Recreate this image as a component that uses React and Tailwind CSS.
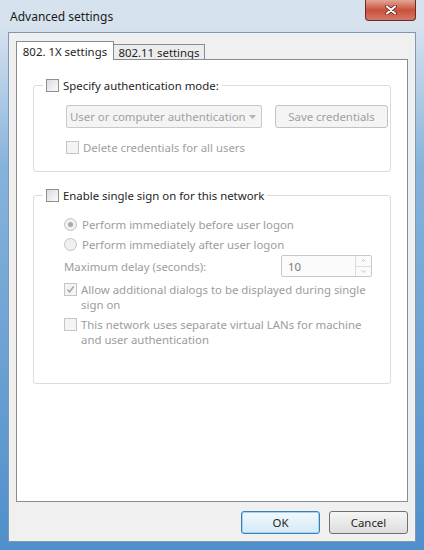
import { ChevronDown, ChevronUp } from 'lucide-react';

function Box({ checked = false, disabled = false }) {
  return (
    <span
      className={`flex h-[13px] w-[13px] shrink-0 items-center justify-center border ${
        disabled ? 'border-[#c5c5c5] bg-[#f4f4f4]' : 'border-[#8f8f8f] bg-gradient-to-br from-[#dcdcdc] to-[#fbfbfb]'
      }`}
    >
      {checked && (
        <svg width="9" height="9" viewBox="0 0 9 9">
          <path d="M1.5 4.5 L3.6 7 L7.6 1.5" fill="none" stroke="#a8a8a8" strokeWidth="1.6" />
        </svg>
      )}
    </span>
  );
}

function Radio({ checked = false }) {
  return (
    <span className="flex h-[13px] w-[13px] shrink-0 items-center justify-center rounded-full border border-[#c3c3c3] bg-[#f0f0f0]">
      {checked && <span className="h-[5px] w-[5px] rounded-full bg-[#a9a9a9]" />}
    </span>
  );
}

function Group({ label, className, children }) {
  return (
    <div className={`relative rounded-[3px] border border-[#dcdcdc] ${className}`}>
      <div className="absolute left-[9px] top-[-8px] flex items-center gap-[4px] bg-white px-[3px] text-[#1e1e1e]">
        <Box />
        <span>{label}</span>
      </div>
      {children}
    </div>
  );
}

export default function App() {
  return (
    <div
      className="flex h-[550px] w-[424px] flex-col bg-gradient-to-b from-[#d6e2ee] from-5% via-[#86b3dc] via-30% to-[#4f8fcb] text-[11.4px] leading-[15px]"
      style={{ fontFamily: '"Noto Sans", "Open Sans", sans-serif' }}
    >
      <div className="relative flex h-[32px] items-center pl-[10px] text-[12px] text-[#1b1b1b]">
        Advanced settings
        <div className="absolute right-[8px] top-0 flex h-[21px] w-[51px] items-center justify-center rounded-b-[4px] border border-t-0 border-[#6e2a22] bg-gradient-to-b from-[#e2a595] via-[#c9503a] to-[#d2786a]">
          <svg width="12" height="10" viewBox="0 0 12 10">
            <path d="M2 1.5 L10 8.5 M10 1.5 L2 8.5" stroke="#5a1a10" strokeWidth="3.6" strokeLinecap="round" />
            <path d="M2 1.5 L10 8.5 M10 1.5 L2 8.5" stroke="#ffffff" strokeWidth="2.2" strokeLinecap="round" />
          </svg>
        </div>
      </div>

      <div className="mx-[8px] mb-[8px] flex flex-1 flex-col border border-[#8498ad] bg-[#f0f0f0] px-[7px] pt-[8px]">
        <div className="flex items-end">
          <div className="z-10 -mb-px flex h-[19px] w-[98px] items-center justify-center border border-b-0 border-[#898c95] bg-white text-[#1e1e1e]">
            802. 1X settings
          </div>
          <div className="flex h-[15px] w-[91px] items-center justify-center whitespace-nowrap border border-b-0 border-l-0 border-[#898c95] bg-[#ececec] text-[#1e1e1e]">
            802.11 settings
          </div>
        </div>

        <div className="flex h-[443px] flex-col border border-[#898c95] bg-white px-[16px] pt-[25px]">
          <Group label="Specify authentication mode:" className="h-[87px]">
            <div className="flex items-center gap-[13px] pl-[32px] pt-[19px]">
              <div className="flex h-[23px] w-[196px] items-center justify-between whitespace-nowrap rounded-[2px] border border-[#c9c9c9] bg-[#f4f4f4] pl-[3px] pr-[5px] text-[#a0a0a0]">
                <span>User or computer authentication</span>
                <svg width="7" height="4" viewBox="0 0 7 4">
                  <path d="M0 0 L7 0 L3.5 4 Z" fill="#b3b3b3" />
                </svg>
              </div>
              <div className="flex h-[23px] w-[113px] items-center justify-center rounded-[3px] border border-[#c2c2c2] bg-[#f4f4f4] text-[#a0a0a0]">
                Save credentials
              </div>
            </div>
            <div className="flex items-center gap-[4px] pl-[32px] pt-[12px] text-[#a0a0a0]">
              <Box disabled />
              <span>Delete credentials for all users</span>
            </div>
          </Group>

          <Group label="Enable single sign on for this network" className="mt-[23px] h-[189px]">
            <div className="flex flex-col pl-[30px] pr-[18px] pt-[21px] text-[#9c9c9c]">
              <div className="flex items-center gap-[5px]">
                <Radio checked />
                <span>Perform immediately before user logon</span>
              </div>
              <div className="mt-[5px] flex items-center gap-[5px]">
                <Radio />
                <span>Perform immediately after user logon</span>
              </div>
              <div className="mt-[3px] flex items-center justify-between">
                <span>Maximum delay (seconds):</span>
                <div className="flex h-[22px] w-[91px] items-stretch rounded-[2px] border border-[#c9c9c9] bg-[#fbfbfb]">
                  <span className="flex flex-1 items-center pl-[6px] text-[#7a7a7a]">10</span>
                  <div className="flex w-[16px] flex-col border-l border-[#dcdcdc]">
                    <span className="flex flex-1 items-center justify-center border-b border-[#dcdcdc]">
                      <ChevronUp size={7} strokeWidth={3} color="#b8b8b8" />
                    </span>
                    <span className="flex flex-1 items-center justify-center">
                      <ChevronDown size={7} strokeWidth={3} color="#b8b8b8" />
                    </span>
                  </div>
                </div>
              </div>
              <div className="mt-[5px] flex items-start gap-[4px]">
                <span className="pt-[1px]">
                  <Box checked disabled />
                </span>
                <span className="w-[296px] shrink-0">Allow additional dialogs to be displayed during single sign on</span>
              </div>
              <div className="mt-[5px] flex items-start gap-[4px]">
                <span className="pt-[1px]">
                  <Box disabled />
                </span>
                <span className="w-[296px] shrink-0">This network uses separate virtual LANs for machine and user authentication</span>
              </div>
            </div>
          </Group>
        </div>

        <div className="flex justify-end gap-[9px] pt-[9px]">
          <div className="flex h-[23px] w-[79px] items-center justify-center rounded-[3px] border border-[#3c7fb1] bg-gradient-to-b from-[#f2f9fd] to-[#d6e9f5] text-[#1e1e1e] shadow-[inset_0_0_0_1px_#9fd6f2]">
            OK
          </div>
          <div className="flex h-[23px] w-[79px] items-center justify-center rounded-[3px] border border-[#707070] bg-gradient-to-b from-[#f5f5f5] to-[#dddddd] text-[#1e1e1e]">
            Cancel
          </div>
        </div>
      </div>
    </div>
  );
}
